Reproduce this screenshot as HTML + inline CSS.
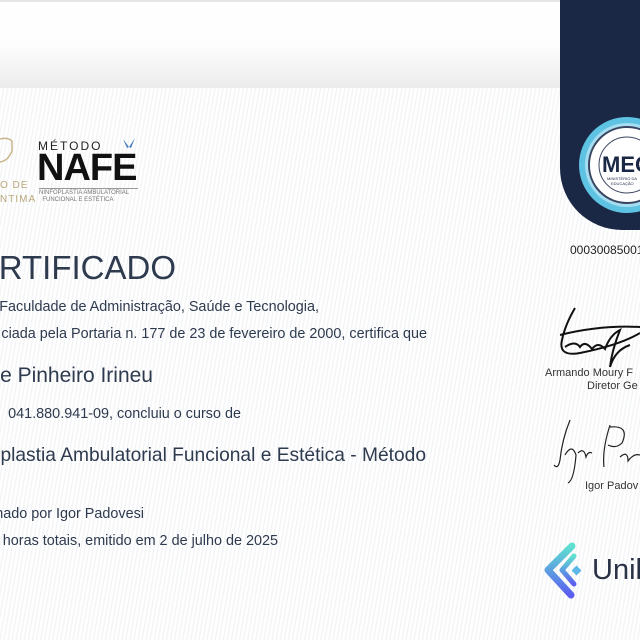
<!DOCTYPE html>
<html><head><meta charset="utf-8"><style>
body{margin:0;width:640px;height:640px;overflow:hidden;position:relative;font-family:"Liberation Sans",sans-serif;
background:repeating-linear-gradient(100deg,#ffffff 0px,#ffffff 2px,#eef0f3 3px,#ffffff 4px);}
.top{position:absolute;left:0;top:0;width:560px;height:88px;background:linear-gradient(#fff 0%,#fdfdfd 50%,#ececec 100%);border-top:2px solid #e6e6e6;box-sizing:border-box}
.navy{position:absolute;left:560px;top:0;width:90px;height:230px;background:#1b2845;border-bottom-left-radius:62px}
.t{position:absolute;white-space:nowrap;color:#2e3a4e;text-align:right}
</style></head><body>
<div class="top"></div>
<div class="navy"></div>
<svg style="position:absolute;left:565px;top:112px" width="75" height="106" viewBox="0 0 75 106">
<circle cx="62" cy="53" r="48" fill="#5ec3e3"/>
<circle cx="62" cy="53" r="42" fill="#a6ddf0"/>
<circle cx="62" cy="53" r="38" fill="#fff" stroke="#3a4560" stroke-width="2"/>
<circle cx="62" cy="53" r="28" fill="none" stroke="#3a4560" stroke-width="1"/>
<text x="37" y="60" font-family="Liberation Sans" font-weight="bold" font-size="22" fill="#1b2845">MEC</text>
<text x="42" y="68" font-family="Liberation Sans" font-size="4" fill="#1b2845">MINISTÉRIO DA</text>
<text x="46" y="73" font-family="Liberation Sans" font-size="4" fill="#1b2845">EDUCAÇÃO</text>
</svg>
<div class="t" style="left:570px;top:243px;font-size:12px;color:#222">00030085001</div>
<svg style="position:absolute;left:0;top:135px" width="14" height="30"><path d="M0 4 Q8 2 12 6 L12 16 Q8 26 0 27" fill="none" stroke="#c9b58a" stroke-width="1.5"/></svg>
<div class="t" style="left:0;top:180px;font-size:10px;color:#b9a67a;letter-spacing:1px">O DE</div>
<div class="t" style="left:0;top:194px;font-size:10px;color:#b9a67a;letter-spacing:1px">NTIMA</div>
<div class="t" style="left:38px;top:139px;font-size:12px;color:#222;letter-spacing:2px">MÉTODO</div>
<svg style="position:absolute;left:121px;top:137px" width="16" height="14"><path d="M8 10 L2 2 L6 11 Z M8 10 L14 1 L10 11 Z" fill="#4a7fc1"/></svg>
<div class="t" style="left:37px;top:149px;font-size:38px;font-weight:bold;color:#111;letter-spacing:-1px;line-height:38px">NAFE</div>
<div style="position:absolute;left:39px;top:188px;width:99px;height:1px;background:#999"></div>
<div class="t" style="left:39px;top:190px;font-size:6px;color:#777;line-height:7px;text-align:left">NINFOPLASTIA AMBULATORIAL<br>&nbsp;&nbsp;FUNCIONAL E ESTÉTICA</div>
<div class="t" style="right:464px;top:250px;font-size:33px;line-height:36px">RTIFICADO</div>
<div class="t" style="right:321px;top:299px;font-size:14.4px">Faculdade de Administração, Saúde e Tecnologia,</div>
<div class="t" style="right:213px;top:326px;font-size:14.4px">ciada pela Portaria n. 177 de 23 de fevereiro de 2000, certifica que</div>
<div class="t" style="right:487px;top:364px;font-size:21px">e Pinheiro Irineu</div>
<div class="t" style="right:399px;top:406px;font-size:14.4px">041.880.941-09, concluiu o curso de</div>
<div class="t" style="right:214px;top:445px;font-size:19.2px">plastia Ambulatorial Funcional e Estética - Método</div>
<div class="t" style="right:496px;top:506px;font-size:14.4px">nado por Igor Padovesi</div>
<div class="t" style="right:362px;top:533px;font-size:14.4px">horas totais, emitido em 2 de julho de 2025</div>
<svg style="position:absolute;left:550px;top:305px" width="90" height="65"><path d="M25 3 Q15 20 12 35 Q8 52 30 48 Q70 40 90 28 M10 30 Q50 20 90 22 M15 42 Q25 35 30 42 Q35 35 42 44 Q48 36 55 44 Q60 30 70 25 Q62 45 60 62 Q65 45 80 40" fill="none" stroke="#111" stroke-width="2"/></svg>
<div class="t" style="left:545px;top:367px;font-size:11px;color:#333">Armando Moury F</div>
<div class="t" style="left:587px;top:380px;font-size:11px;color:#333">Diretor Ge</div>
<svg style="position:absolute;left:550px;top:415px" width="90" height="70"><path d="M20 5 Q12 25 10 45 Q8 55 4 50 M15 40 Q22 28 26 40 Q24 65 18 68 M28 38 Q34 32 36 42 Q38 36 42 38 M60 10 Q52 35 54 52 M60 12 Q80 10 72 28 Q66 34 58 30 M70 42 Q78 35 78 46 Q84 38 90 40" fill="none" stroke="#222" stroke-width="1.2"/></svg>
<div class="t" style="left:585px;top:480px;font-size:11px;color:#333">Igor Padov</div>
<svg style="position:absolute;left:540px;top:540px" width="50" height="65"><defs><linearGradient id="g" x1="0" y1="0" x2="0" y2="1"><stop offset="0" stop-color="#5fe0d0"/><stop offset="1" stop-color="#5b5ef0"/></linearGradient></defs>
<path d="M32 6 L8 30 L31 55" fill="none" stroke="url(#g)" stroke-width="7" stroke-linecap="round" stroke-linejoin="round"/>
<path d="M34 16 L22 30 L34 44" fill="none" stroke="url(#g)" stroke-width="5" stroke-linecap="round" stroke-linejoin="round"/>
<rect x="33" y="27" width="7" height="7" transform="rotate(45 36.5 30.5)" fill="#5bb8e8"/></svg>
<div class="t" style="left:592px;top:554px;font-size:29px;color:#2a3346">Unil</div>
</body></html>
